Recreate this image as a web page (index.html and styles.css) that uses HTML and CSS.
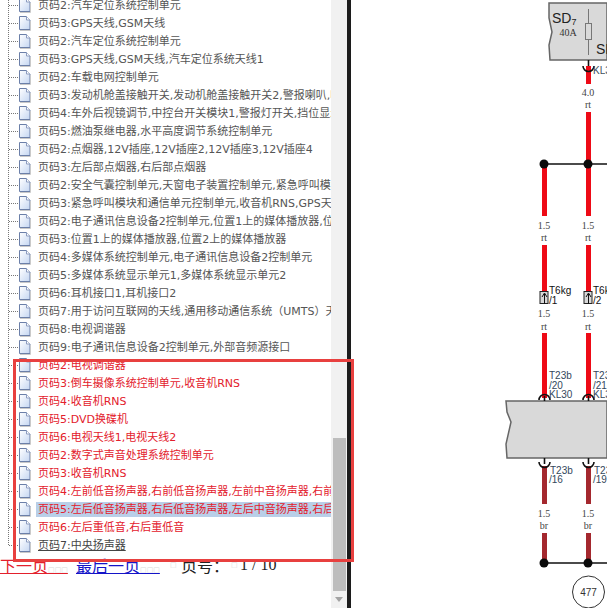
FILE: index.html
```html
<!DOCTYPE html>
<html lang="zh">
<head>
<meta charset="utf-8">
<title>电路图</title>
<link rel="stylesheet" href="styles.css">
</head>
<body>
<svg class="defs" width="0" height="0" aria-hidden="true">
  <defs>
    <linearGradient id="paper" x1="0" y1="0" x2="1" y2="1">
      <stop offset="0" stop-color="#ffffff"/>
      <stop offset="1" stop-color="#c4d6f2"/>
    </linearGradient>
    <symbol id="doc" viewBox="0 0 13 15">
      <path d="M1.5 .5H8.5L12 4V13.5H1.5Z" fill="url(#paper)" stroke="#6b7fa8"/>
      <path d="M8.5 .5V4H12" fill="#fff" stroke="#8c9cc0"/>
      <path d="M2 14.5H12.5V5" fill="none" stroke="#c9c9c9"/>
    </symbol>
  </defs>
</svg>
<div class="app">
  <aside class="side">
    <div class="content">
      <ul class="tree">
        <li class="row"><svg class="ico"><use href="#doc"/></svg><a class="lnk">页码2:汽车定位系统控制单元</a></li>
        <li class="row"><svg class="ico"><use href="#doc"/></svg><a class="lnk">页码3:GPS天线,GSM天线</a></li>
        <li class="row"><svg class="ico"><use href="#doc"/></svg><a class="lnk">页码2:汽车定位系统控制单元</a></li>
        <li class="row"><svg class="ico"><use href="#doc"/></svg><a class="lnk">页码3:GPS天线,GSM天线,汽车定位系统天线1</a></li>
        <li class="row"><svg class="ico"><use href="#doc"/></svg><a class="lnk">页码2:车载电网控制单元</a></li>
        <li class="row"><svg class="ico"><use href="#doc"/></svg><a class="lnk">页码3:发动机舱盖接触开关,发动机舱盖接触开关2,警报喇叭,喇叭</a></li>
        <li class="row"><svg class="ico"><use href="#doc"/></svg><a class="lnk">页码4:车外后视镜调节,中控台开关模块1,警报灯开关,挡位显示单元</a></li>
        <li class="row"><svg class="ico"><use href="#doc"/></svg><a class="lnk">页码5:燃油泵继电器,水平高度调节系统控制单元</a></li>
        <li class="row"><svg class="ico"><use href="#doc"/></svg><a class="lnk">页码2:点烟器,12V插座,12V插座2,12V插座3,12V插座4</a></li>
        <li class="row"><svg class="ico"><use href="#doc"/></svg><a class="lnk">页码3:左后部点烟器,右后部点烟器</a></li>
        <li class="row"><svg class="ico"><use href="#doc"/></svg><a class="lnk">页码2:安全气囊控制单元,天窗电子装置控制单元,紧急呼叫模块和通信</a></li>
        <li class="row"><svg class="ico"><use href="#doc"/></svg><a class="lnk">页码3:紧急呼叫模块和通信单元控制单元,收音机RNS,GPS天线,天线</a></li>
        <li class="row"><svg class="ico"><use href="#doc"/></svg><a class="lnk">页码2:电子通讯信息设备2控制单元,位置1上的媒体播放器,位置2上的</a></li>
        <li class="row"><svg class="ico"><use href="#doc"/></svg><a class="lnk">页码3:位置1上的媒体播放器,位置2上的媒体播放器</a></li>
        <li class="row"><svg class="ico"><use href="#doc"/></svg><a class="lnk">页码4:多媒体系统控制单元,电子通讯信息设备2控制单元</a></li>
        <li class="row"><svg class="ico"><use href="#doc"/></svg><a class="lnk">页码5:多媒体系统显示单元1,多媒体系统显示单元2</a></li>
        <li class="row"><svg class="ico"><use href="#doc"/></svg><a class="lnk">页码6:耳机接口1,耳机接口2</a></li>
        <li class="row"><svg class="ico"><use href="#doc"/></svg><a class="lnk">页码7:用于访问互联网的天线,通用移动通信系统（UMTS）天线</a></li>
        <li class="row"><svg class="ico"><use href="#doc"/></svg><a class="lnk">页码8:电视调谐器</a></li>
        <li class="row"><svg class="ico"><use href="#doc"/></svg><a class="lnk">页码9:电子通讯信息设备2控制单元,外部音频源接口</a></li>
        <li class="row"><svg class="ico"><use href="#doc"/></svg><a class="lnk hot">页码2:电视调谐器</a></li>
        <li class="row"><svg class="ico"><use href="#doc"/></svg><a class="lnk hot">页码3:倒车摄像系统控制单元,收音机RNS</a></li>
        <li class="row"><svg class="ico"><use href="#doc"/></svg><a class="lnk hot">页码4:收音机RNS</a></li>
        <li class="row"><svg class="ico"><use href="#doc"/></svg><a class="lnk hot">页码5:DVD换碟机</a></li>
        <li class="row"><svg class="ico"><use href="#doc"/></svg><a class="lnk hot">页码6:电视天线1,电视天线2</a></li>
        <li class="row"><svg class="ico"><use href="#doc"/></svg><a class="lnk hot">页码2:数字式声音处理系统控制单元</a></li>
        <li class="row"><svg class="ico"><use href="#doc"/></svg><a class="lnk hot">页码3:收音机RNS</a></li>
        <li class="row"><svg class="ico"><use href="#doc"/></svg><a class="lnk hot">页码4:左前低音扬声器,右前低音扬声器,左前中音扬声器,右前中音扬声器</a></li>
        <li class="row"><svg class="ico"><use href="#doc"/></svg><a class="lnk hot sel">页码5:左后低音扬声器,右后低音扬声器,左后中音扬声器,右后中音扬声器</a></li>
        <li class="row"><svg class="ico"><use href="#doc"/></svg><a class="lnk hot">页码6:左后重低音,右后重低音</a></li>
        <li class="row"><svg class="ico"><use href="#doc"/></svg><a class="lnk cur">页码7:中央扬声器</a></li>
      </ul>
      <nav class="pager">
        <a class="pg red">下一页<span class="tofu">□□□</span></a>
        <a class="pg blue">最后一页<span class="tofu">□□□</span></a>
        <span class="tofu gap">□</span><span class="num">页号：</span><span class="tofu gap2">□</span><span class="count">1 / 10</span>
      </nav>
    </div>
    <div class="scrollbar">
      <div class="thumb"></div>
      <div class="arrow"></div>
    </div>
  </aside>
  <svg class="diagram" viewBox="351 0 256 608" width="256" height="608">
    <g class="wires-red">
      <path d="M588.5 66V84M588.5 112V216M588.5 245V304M588.5 333V398M544.5 164V216M544.5 245V304M544.5 333V398"/>
    </g>
    <g class="wires-br">
      <path d="M544.5 466V504M544.5 533V563M588.5 466V504M588.5 533V563"/>
    </g>
    <path class="box" d="M549 3H607V60H550L549 45L552 32L549 18Z"/>
    <path class="box" d="M506 401H607V458H507L506 444L511 422L507 412Z"/>
    <path class="bus" d="M544 164H607M544 563H607"/>
    <circle class="dot" cx="544" cy="164" r="4.5"/>
    <circle class="dot" cx="588" cy="164" r="4.5"/>
    <circle class="dot" cx="544" cy="563" r="4.5"/>
    <circle class="dot" cx="588" cy="563" r="4.5"/>
    <path class="fuse" d="M588.5 9V23M588.5 39V55"/>
    <rect class="fuse" x="585.5" y="23.5" width="6" height="16"/>
    <path class="pin" d="M588.5 60V66M583 66A5.5 5.5 0 0 0 594 66"/>
    <path class="pin" d="M544.5 396V401M539 400A5.5 5.5 0 0 1 550 400M588.5 396V401M583 400A5.5 5.5 0 0 1 594 400"/>
    <path class="pin" d="M544.5 458V464M539 462A5.5 5.5 0 0 0 550 462M588.5 458V464M583 462A5.5 5.5 0 0 0 594 462"/>
    <g class="conn">
      <rect x="540" y="291.5" width="8" height="12"/>
      <path d="M544.5 304V294M542 297L544.5 293L547 297"/>
      <rect x="584" y="291.5" width="8" height="12"/>
      <path d="M588.5 304V294M586 297L588.5 293L591 297"/>
    </g>
    <g class="lbl-big">
      <text x="552" y="23">SD<tspan class="sub" dy="2">7</tspan></text>
      <text x="596" y="54">SD</text>
    </g>
    <text class="lbl-serif" x="568" y="35.5" text-anchor="middle">40A</text>
    <g class="lbl-wire" text-anchor="middle">
      <text x="588" y="96">4.0</text><text x="588" y="108">rt</text>
      <text x="544" y="229">1.5</text><text x="544" y="241">rt</text>
      <text x="588" y="229">1.5</text><text x="588" y="241">rt</text>
      <text x="544" y="317">1.5</text><text x="544" y="330">rt</text>
      <text x="588" y="317">1.5</text><text x="588" y="330">rt</text>
      <text x="544" y="517">1.5</text><text x="544" y="529">br</text>
      <text x="588" y="517">1.5</text><text x="588" y="529">br</text>
    </g>
    <g class="lbl-pin">
      <text class="ink" x="593" y="74">KL3</text>
      <text class="ink2" x="549" y="294">T6kg</text><text class="ink2" x="549" y="303.5">/1</text>
      <text class="ink2" x="593" y="294">T6k</text><text class="ink2" x="593" y="303.5">/2</text>
      <text x="549" y="379">T23b</text><text x="549" y="389">/20</text><text x="549" y="398">KL30</text>
      <text x="593" y="379">T23</text><text x="593" y="389">/21</text><text x="593" y="398">KL3</text>
      <text x="550" y="474">T23b</text><text x="549" y="483">/16</text>
      <text x="594" y="474">T23</text><text x="593" y="483">/19</text>
    </g>
    <circle class="ring" cx="588.5" cy="592" r="16"/>
    <text class="lbl-ref" x="588.5" y="596" text-anchor="middle">477</text>
  </svg>
</div>
<div class="callout"></div>
</body>
</html>
```

FILE: styles.css
```css
* { box-sizing: border-box; }

html, body {
  margin: 0;
  padding: 0;
  height: 608px;
  overflow: hidden;
  background: #fff;
}

.defs { position: absolute; }

.app {
  display: flex;
  width: 607px;
  height: 608px;
}

.side {
  display: flex;
  flex: none;
  width: 351px;
  height: 608px;
  border-right: 4px solid #1c1c1c;
}

.content {
  width: 331px;
  flex: none;
  overflow: hidden;
}

.tree {
  position: relative;
  list-style: none;
  margin: -4px 0 0 8px;
  padding: 0;
}

.tree::before {
  content: "";
  position: absolute;
  left: 0;
  top: 0;
  bottom: 9px;
  border-left: 1px dotted #777;
}

.row {
  position: relative;
  display: flex;
  align-items: center;
  height: 18px;
  padding-left: 10px;
  white-space: nowrap;
  font-family: "DejaVu Sans", "Noto Sans CJK SC", sans-serif;
  font-size: 11px;
  line-height: 15px;
}

.row::before {
  content: "";
  position: absolute;
  left: 1px;
  top: 9px;
  width: 9px;
  border-top: 1px dotted #777;
}

.ico {
  flex: none;
  width: 13px;
  height: 15px;
  margin-right: 5px;
}

.lnk {
  flex: 1 0 auto;
  padding: 0 2px;
  color: #555;
}

.hot { color: #e3202c; }

.cur {
  color: #444;
  text-decoration: underline;
}

.sel { background: #b9cfe8; }

.pager {
  display: flex;
  height: 18px;
  margin-top: 2px;
  white-space: nowrap;
  font-family: "Noto Sans CJK SC", sans-serif;
  font-size: 16px;
  line-height: 18px;
  color: #222;
}

.pg { text-decoration: underline; }

.red { color: #e3202c; width: 76px; flex: none; }

.blue { color: #1414c8; width: 92px; flex: none; }

.tofu {
  font-family: "DejaVu Sans", sans-serif;
  font-size: 7px;
  letter-spacing: 0;
  color: #d9d9d9;
}

.gap { width: 13px; flex: none; padding-left: 2px; }

.num { width: 50px; flex: none; }

.gap2 { width: 9px; flex: none; }

.count {
  font-family: "Liberation Serif", serif;
}

.scrollbar {
  position: relative;
  flex: none;
  width: 16px;
  height: 608px;
  background: #f1f1f1;
}

.thumb {
  position: absolute;
  left: 2px;
  right: 1px;
  top: 438px;
  height: 153px;
  background: #bdbdbd;
}

.arrow {
  position: absolute;
  left: 4px;
  top: 597px;
  border-left: 4px solid transparent;
  border-right: 4px solid transparent;
  border-top: 5px solid #a3a3a3;
}

.diagram {
  display: block;
  flex: none;
  font-family: "Liberation Sans", sans-serif;
}

.wires-red path { fill: none; stroke: #ee0a16; stroke-width: 5; }

.wires-br path { fill: none; stroke: #a4282e; stroke-width: 5; }

.box { fill: #d9d9d9; stroke: #666; stroke-width: 1.5; }

.bus { fill: none; stroke: #111; stroke-width: 1.3; }

.dot { fill: #0a0a0a; }

.fuse { fill: none; stroke: #777; stroke-width: 1; }

.pin { fill: none; stroke: #111; stroke-width: 1.6; }

.conn rect { fill: #d8d8d8; stroke: #222; stroke-width: 1; }

.conn path { fill: none; stroke: #111; stroke-width: 1; }

.lbl-big { font-size: 14px; fill: #222; }

.sub { font-size: 9px; }

.lbl-serif { font-family: "Liberation Serif", serif; font-size: 10px; fill: #333; }

.lbl-wire { font-family: "Liberation Serif", serif; font-size: 10px; fill: #444; }

.lbl-pin { font-size: 10px; fill: #33475c; }

.ink { fill: #3c4f60; }

.ink2 { fill: #111; }

.ring { fill: #fff; stroke: #333; stroke-width: 1; }

.lbl-ref { font-size: 10px; fill: #333; }

.callout {
  position: absolute;
  left: 13px;
  top: 359px;
  width: 341px;
  height: 203px;
  border: 3px solid #e8403f;
}
```
